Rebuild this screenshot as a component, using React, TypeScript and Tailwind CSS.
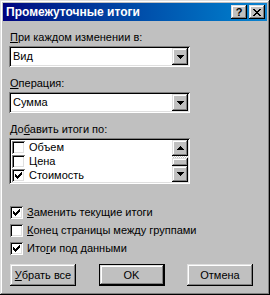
import { ReactNode } from "react"

const raised = "shadow-[inset_-1px_-1px_0_#000,inset_1px_1px_0_#dfdfdf,inset_-2px_-2px_0_#808080,inset_2px_2px_0_#fff]"
const sunken = "shadow-[inset_1px_1px_0_#808080,inset_-1px_-1px_0_#fff,inset_2px_2px_0_#000,inset_-2px_-2px_0_#dfdfdf]"

const Check = () => (
    <svg width="7" height="7" viewBox="0 0 7 7" shapeRendering="crispEdges">
        <path d="M6 0h1v3h-1zM5 1h1v3h-1zM4 2h1v3h-1zM3 3h1v3h-1zM2 4h1v3h-1zM1 3h1v3h-1zM0 2h1v3h-1z" fill="#000" />
    </svg>
)

const Box = ({ checked }: { checked?: boolean }) => (
    <div className={`w-[13px] h-[13px] bg-white flex items-center justify-center shrink-0 ${sunken}`}>
        {checked && <Check />}
    </div>
)

const Arrow = ({ up }: { up?: boolean }) => (
    <svg width="7" height="4" viewBox="0 0 7 4" shapeRendering="crispEdges">
        <path d={up ? "M3 0h1v1h1v1h1v1h1v1h-7v-1h1v-1h1v-1h1z" : "M0 0h7v1h-1v1h-1v1h-1v1h-1v-1h-1v-1h-1v-1h-1z"} fill="#000" />
    </svg>
)

const Combo = ({ value }: { value: string }) => (
    <div className={`w-[181px] h-[21px] bg-white flex items-center p-[2px] ${sunken}`}>
        <span className="flex-1 pl-[2px] leading-none">{value}</span>
        <div className={`w-[16px] h-[17px] bg-[#c0c0c0] flex items-center justify-center ${raised}`}>
            <Arrow />
        </div>
    </div>
)

const Label = ({ children }: { children: ReactNode }) => (
    <div className="h-[13px] leading-[13px] pl-[1px]">{children}</div>
)

const Btn = ({ children, def }: { children: ReactNode; def?: boolean }) => (
    <div className={`w-[66px] h-[22px] flex items-center justify-center ${def ? "border border-black" : ""}`}>
        <div className={`w-full h-full bg-[#c0c0c0] flex items-center justify-center ${raised}`}>{children}</div>
    </div>
)

const App = () => {
    return <main className="w-[270px] h-[295px] bg-white">
        <div className={`w-[270px] h-[295px] bg-[#c0c0c0] p-[3px] flex flex-col text-[11px] text-black ${raised}`} style={{ fontFamily: '"Liberation Sans", Arial, sans-serif' }}>
            <div className="h-[18px] bg-gradient-to-r from-[#000080] to-[#1084d0] flex items-center pl-[3px] pr-[2px]">
                <span className="flex-1 text-white font-bold text-[12px] leading-none">Промежуточные итоги</span>
                <div className={`w-[16px] h-[14px] bg-[#c0c0c0] flex items-center justify-center font-bold text-[11px] leading-none ${raised}`}>?</div>
                <div className={`w-[16px] h-[14px] ml-[2px] bg-[#c0c0c0] flex items-center justify-center ${raised}`}>
                    <svg width="8" height="7" viewBox="0 0 8 7" shapeRendering="crispEdges">
                        <path d="M0 0h2v1h1v1h2v-1h1v-1h2v1h-1v1h-1v1h-1v1h1v1h1v1h1v1h-2v-1h-1v-1h-2v1h-1v1h-2v-1h1v-1h1v-1h1v-1h-1v-1h-1v-1h-1z" fill="#000" />
                    </svg>
                </div>
            </div>
            <section className="flex flex-col px-[6px]">
                <div className="mt-[10px]"><Label><u>П</u>ри каждом изменении в:</Label></div>
                <div className="mt-[2px]"><Combo value="Вид" /></div>
                <div className="mt-[10px]"><Label><u>О</u>перация:</Label></div>
                <div className="mt-[2px]"><Combo value="Сумма" /></div>
                <div className="mt-[10px]"><Label>До<u>б</u>авить итоги по:</Label></div>
                <div className={`mt-[2px] w-[181px] h-[46px] bg-white flex p-[2px] ${sunken}`}>
                    <div className="flex-1 flex flex-col">
                        {[["Объем", false], ["Цена", false], ["Стоимость", true]].map(([t, c]) => (
                            <div key={t as string} className="h-[14px] flex items-center gap-[4px] pl-[1px]">
                                <Box checked={c as boolean} />
                                <span className="leading-none">{t as string}</span>
                            </div>
                        ))}
                    </div>
                    <div className="w-[16px] flex flex-col">
                        <div className={`h-[16px] bg-[#c0c0c0] flex items-center justify-center ${raised}`}><Arrow up /></div>
                        <div className="h-[2px] bg-[repeating-conic-gradient(#fff_0_25%,#c0c0c0_0_50%)] bg-[length:2px_2px]" />
                        <div className={`flex-1 bg-[#c0c0c0] ${raised}`} />
                        <div className={`h-[16px] bg-[#c0c0c0] flex items-center justify-center ${raised}`}><Arrow /></div>
                    </div>
                </div>
                <div className="mt-[21px] flex flex-col gap-[4px] pl-[1px]">
                    <div className="h-[14px] flex items-center gap-[4px]"><Box checked /><span><u>З</u>аменить текущие итоги</span></div>
                    <div className="h-[14px] flex items-center gap-[4px]"><Box /><span><u>К</u>онец страницы между группами</span></div>
                    <div className="h-[14px] flex items-center gap-[4px]"><Box checked /><span>Ито<u>г</u>и под данными</span></div>
                </div>
                <div className="mt-[9px] flex justify-between pl-[1px] pr-[8px]">
                    <Btn><u>У</u>брать все</Btn>
                    <Btn def>OK</Btn>
                    <Btn>Отмена</Btn>
                </div>
            </section>
        </div>
    </main>
}

export default App
